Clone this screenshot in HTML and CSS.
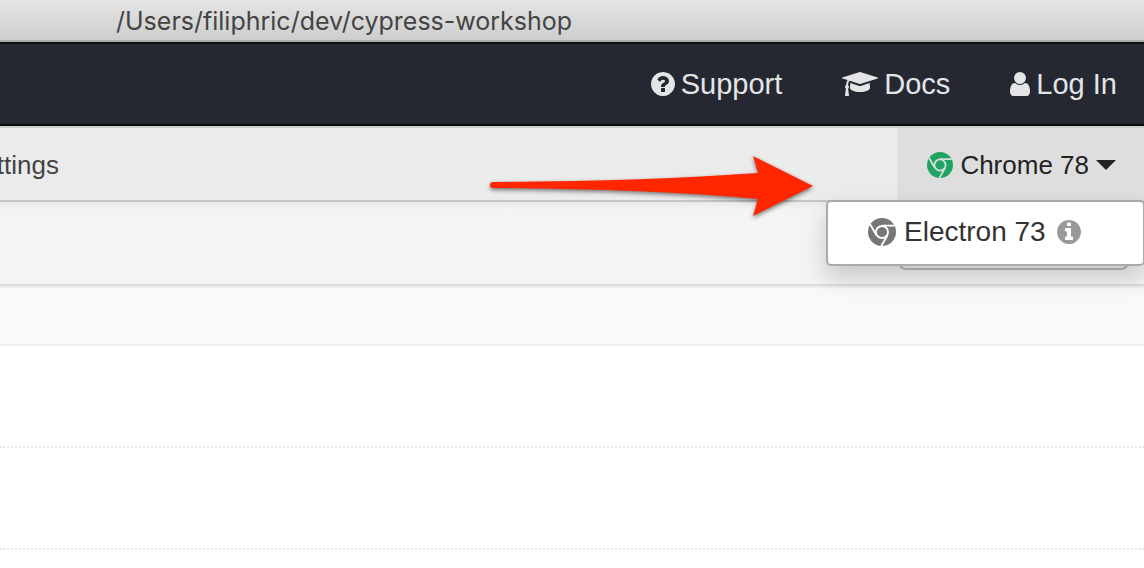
FILE: index.html
```html
<!DOCTYPE html>
<html lang="en">
<head>
<meta charset="utf-8">
<title>/Users/filiphric/dev/cypress-workshop</title>
<link rel="stylesheet" href="styles.css">
</head>
<body>
<div class="titlebar">/Users/filiphric/dev/cypress-workshop</div>
<nav class="topnav">
  <a class="toplink" href="#"><svg class="icon-round" viewBox="128 128 1536 1536" aria-hidden="true"><path d="M1024 1376v-192q0-14-9-23t-23-9h-192q-14 0-23 9t-9 23v192q0 14 9 23t23 9h192q14 0 23-9t9-23zm256-672q0-88-55.500-163t-138.500-116-170-41q-243 0-371 213-15 24 8 42l132 100q7 6 19 6 16 0 25-12 53-68 86-92 34-24 86-24 48 0 85.500 26t37.500 59q0 38-20 61t-68 45q-63 28-115.500 86.500t-52.500 125.500v36q0 14 9 23t23 9h192q14 0 23-9t9-23q0-19 21.500-49.500t54.500-49.500q32-18 49-28.500t46-35 44.500-48 28-60.500 12.500-81zm384 192q0 209-103 385.500t-279.500 279.500-385.500 103-385.500-103-279.500-279.500-103-385.500 103-385.500 279.500-279.500 385.500-103 385.500 103 279.500 279.500 103 385.500z"/></svg>Support</a>
  <a class="toplink" href="#"><svg class="icon-cap" viewBox="0 128 2304 1536" aria-hidden="true"><path d="M1774 836l18 316q4 69-82 128t-235 93.500-323 34.500-323-34.500-235-93.500-82-128l18-316 574 181q22 7 48 7t48-7zm530-324q0 23-22 31l-1120 352q-4 1-10 1t-10-1l-652-206q-43 34-71 111.500t-34 178.500q63 36 63 109 0 69-58 107l58 433q2 14-8 25-9 11-24 11h-192q-15 0-24-11-10-11-8-25l58-433q-58-38-58-107 0-73 65-111 11-207 98-330l-333-104q-22-8-22-31t22-31l1120-352q4-1 10-1t10 1l1120 352q22 8 22 31z"/></svg>Docs</a>
  <a class="toplink" href="#"><svg class="icon-user" viewBox="256 128 1280 1536" aria-hidden="true"><path d="M1536 1399q0 109-62.500 187t-150.500 78h-854q-88 0-150.500-78t-62.500-187q0-85 8.500-160.500t31.500-152 58.500-131 94-89 134.500-34.500q131 128 313 128t313-128q76 0 134.500 34.500t94 89 58.500 131 31.500 152 8.500 160.500zm-256-887q0 159-112.500 271.500t-271.500 112.500-271.500-112.500-112.500-271.500 112.500-271.500 271.500-112.500 271.500 112.500 112.500 271.500z"/></svg>Log In</a>
</nav>
<div class="tabs">
  <a class="tab" href="#">Settings</a>
  <div class="browsers">
    <button class="browser-toggle" type="button" aria-expanded="true"><svg class="icon-chrome" viewBox="-13 -13 26 26" aria-hidden="true"><circle r="13" fill="#1da462"/><g fill="none" stroke="#dedede" stroke-width="1.700"><circle r="5.600"/><path d="M0-5.900H11.800"/><path d="M0-5.900H11.800" transform="rotate(120)"/><path d="M0-5.900H11.800" transform="rotate(240)"/></g></svg>Chrome 78<span class="caret"></span></button>
    <div class="menu">
      <a class="menu-item" href="#"><svg class="icon-electron" viewBox="-13 -13 26 26" aria-hidden="true"><circle r="13" fill="#777"/><g fill="none" stroke="#fff" stroke-width="1.700"><circle r="5.600"/><path d="M0-5.900H11.800"/><path d="M0-5.900H11.800" transform="rotate(120)"/><path d="M0-5.900H11.800" transform="rotate(240)"/></g></svg>Electron 73<svg class="icon-info" viewBox="128 128 1536 1536" aria-hidden="true"><path d="M1152 1376v-160q0-14-9-23t-23-9h-96v-512q0-14-9-23t-23-9h-320q-14 0-23 9t-9 23v160q0 14 9 23t23 9h96v320h-96q-14 0-23 9t-9 23v160q0 14 9 23t23 9h448q14 0 23-9t9-23zm-128-896v-160q0-14-9-23t-23-9h-192q-14 0-23 9t-9 23v160q0 14 9 23t23 9h192q14 0 23-9t9-23zm640 416q0 209-103 385.500t-279.500 279.500-385.500 103-385.500-103-279.500-279.500-103-385.500 103-385.500 279.500-279.500 385.500-103 385.500 103 279.500 279.500 103 385.500z"/></svg></a>
    </div>
    <svg class="arrow" viewBox="0 0 336 72" aria-hidden="true"><path d="M7 31Q160 30 272 22L267 5 327 35 267 65 272 48Q160 38 7 37Q4 37 4 34Q4 31 7 31Z"/></svg>
  </div>
</div>
<main>
  <div class="toolbar"><div class="box"></div></div>
  <div class="list-head"></div>
  <div class="row"></div>
  <div class="row"></div>
</main>
</body>
</html>
```
FILE: styles.css
```css
* { box-sizing: border-box; }
body {
  margin: 0;
  background: #fff;
  color: #333;
  font-family: "Liberation Sans", Arial, sans-serif;
  overflow-x: hidden;
}
a { color: inherit; text-decoration: none; }
svg { display: block; flex: none; }
.titlebar {
  height: 42px;
  padding-left: 116px;
  border-bottom: 2px solid #aaa;
  background: linear-gradient(#e4e4e4, #cecece);
  color: #444;
  font: 25px/42px Inter, sans-serif;
  white-space: nowrap;
}
.topnav {
  display: flex;
  align-items: center;
  justify-content: flex-end;
  gap: 60px;
  height: 84px;
  padding-right: 27px;
  border-top: 2px solid #0f1015;
  border-bottom: 2px solid #08090c;
  background: #252831;
  color: #e4e5e7;
  font-size: 29px;
}
.toplink {
  display: flex;
  align-items: center;
  gap: 6px;
  white-space: nowrap;
}
.topnav svg { fill: currentColor; }
.icon-round { width: 24px; height: 24px; }
.icon-cap { width: 36px; height: 24px; }
.icon-user { width: 20px; height: 24px; }
.tabs {
  display: flex;
  justify-content: space-between;
  height: 76px;
  border-top: 2px solid #ccc;
  border-bottom: 2px solid #c4c4c4;
  background: #ebebeb;
  font-size: 26px;
}
.tab {
  display: flex;
  align-items: center;
  margin-left: -35px;
  padding-top: 2px;
  color: #444;
}
.browsers { position: relative; display: flex; }
.browser-toggle {
  display: flex;
  align-items: center;
  gap: 7px;
  padding: 2px 28px 0 30px;
  border: 0;
  background: #dedede;
  color: #222;
  font: inherit;
}
.icon-chrome { width: 26px; height: 26px; }
.caret {
  border: 10px solid transparent;
  border-top-color: currentColor;
  border-bottom: 0;
}
.menu {
  position: absolute;
  top: 100%;
  right: -1px;
  z-index: 1;
  width: 319px;
  border: 2px solid #aaa;
  border-radius: 5px;
  background: #fff;
  background-clip: padding-box;
  box-shadow: 0 12px 24px rgba(0, 0, 0, .18);
}
.menu-item {
  display: flex;
  align-items: center;
  gap: 8px;
  height: 62px;
  padding: 0 0 2px 40px;
  font-size: 28px;
  white-space: nowrap;
}
.icon-electron { width: 28px; height: 28px; }
.icon-info {
  width: 24px;
  height: 24px;
  margin-left: 3px;
  fill: #999;
}
.arrow {
  position: absolute;
  top: 23px;
  right: 322px;
  z-index: 2;
  width: 336px;
  height: 72px;
  overflow: visible;
  fill: #ff2600;
  filter: drop-shadow(0 2px 2px rgba(0, 0, 0, .5));
}
.toolbar {
  display: flex;
  justify-content: flex-end;
  height: 84px;
  padding: 16px 15px 14px;
  border-bottom: 2px solid #ddd;
  background: linear-gradient(#e9e9e9, #f4f4f4 8px);
}
.box {
  width: 231px;
  border: 2px solid #bbb;
  border-radius: 8px;
  background: #f4f4f4;
}
.list-head {
  height: 60px;
  border-top: 2px solid #eee;
  border-bottom: 2px solid #eee;
  background: #f9f9f9;
}
.row {
  height: 102px;
  border-bottom: 2px dotted #eaeaea;
}
```
